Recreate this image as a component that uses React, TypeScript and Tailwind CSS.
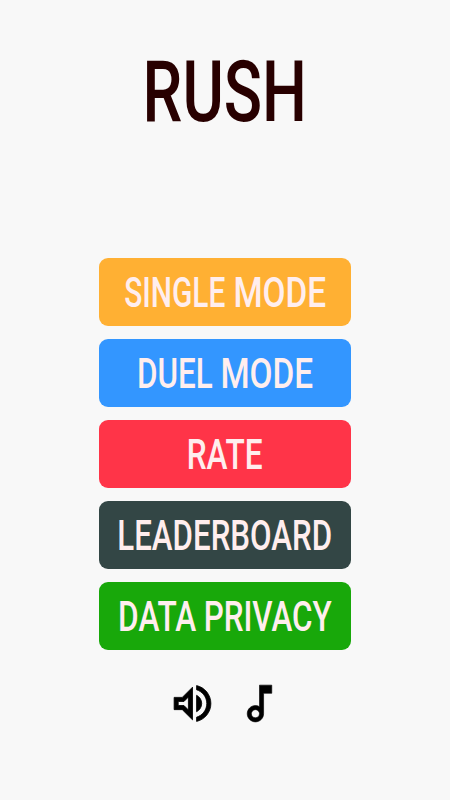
type Word = {
  text: string;
  box: string;
  scale: string;
};

type MenuItem = {
  color: string;
  gap: string;
  words: Word[];
};

const items: MenuItem[] = [
  {
    color: "bg-[#ffb033]",
    gap: "gap-[8px]",
    words: [
      { text: "SINGLE", box: "w-[101px]", scale: "scale-x-[0.695]" },
      { text: "MODE", box: "w-[92px]", scale: "scale-x-[0.775]" },
    ],
  },
  {
    color: "bg-[#3396ff]",
    gap: "gap-[8px]",
    words: [
      { text: "DUEL", box: "w-[75px]", scale: "scale-x-[0.73]" },
      { text: "MODE", box: "w-[92px]", scale: "scale-x-[0.775]" },
    ],
  },
  {
    color: "bg-[#ff3448]",
    gap: "gap-0",
    words: [{ text: "RATE", box: "w-[75px]", scale: "scale-x-[0.735]" }],
  },
  {
    color: "bg-[#334645]",
    gap: "gap-0",
    words: [{ text: "LEADERBOARD", box: "w-[213px]", scale: "scale-x-[0.727]" }],
  },
  {
    color: "bg-[#18a80a]",
    gap: "gap-[9px]",
    words: [
      { text: "DATA", box: "w-[77px]", scale: "scale-x-[0.735]" },
      { text: "PRIVACY", box: "w-[127px]", scale: "scale-x-[0.73]" },
    ],
  },
];

function MenuButton({ color, gap, words }: MenuItem) {
  return (
    <button
      className={`flex h-[67.5px] w-full items-center justify-center rounded-[9px] pt-[2px] text-[43px] leading-none font-medium text-[#ffeeee] ${color} ${gap}`}
    >
      {words.map((word) => (
        <span key={word.text} className={`flex justify-center ${word.box}`}>
          <span className={`shrink-0 whitespace-nowrap ${word.scale}`}>
            {word.text}
          </span>
        </span>
      ))}
    </button>
  );
}

function VolumeIcon() {
  return (
    <svg viewBox="0 0 24 24" className="size-[49px]" fill="currentColor" stroke="currentColor" strokeWidth={0.4}>
      <path d="M3 9v6h4l5 5V4L7 9H3z M10 8.83v6.34L7.83 13H5v-2h2.83L10 8.83z" fillRule="evenodd" />
      <path d="M16.5 12c0-1.77-1.02-3.29-2.5-4.03v8.05c1.48-.73 2.5-2.25 2.5-4.02z" />
      <path d="M14 3.23v2.06c2.89.86 5 3.54 5 6.71s-2.11 5.85-5 6.71v2.06c4.01-.91 7-4.49 7-8.77s-2.99-7.86-7-8.77z" />
    </svg>
  );
}

function NoteIcon() {
  return (
    <svg viewBox="0 0 24 24" className="size-[49px]" fill="currentColor" stroke="currentColor" strokeWidth={0.3}>
      <path
        d="M12 3l.01 10.55c-.59-.34-1.27-.55-2-.55C7.79 13 6 14.79 6 17s1.79 4 4.01 4S14 19.21 14 17V7h4V3h-6z M10.01 19c-1.1 0-2-.9-2-2s.9-2 2-2 2 .9 2 2-.9 2-2 2z"
        fillRule="evenodd"
      />
    </svg>
  );
}

export default function App() {
  return (
    <div className="flex h-[800px] w-[450px] flex-col items-center overflow-hidden bg-[#f8f8f8] font-['Roboto',sans-serif]">
      {/* Title */}
      <h1 className="mt-[48px] flex h-[88px] w-[158px] justify-center text-[86px] leading-[88px] font-medium text-[#280000]">
        <span className="shrink-0 scale-x-[0.735]">RUSH</span>
      </h1>

      {/* Menu */}
      <div className="mt-[122px] flex w-[252.5px] flex-col gap-[13.5px]">
        {items.map((item) => (
          <MenuButton key={item.color} {...item} />
        ))}
      </div>

      {/* Sound toggles */}
      <div className="mt-[29.5px] flex gap-[18px] pl-[1px] text-black">
        <button aria-label="Sound">
          <VolumeIcon />
        </button>
        <button aria-label="Music">
          <NoteIcon />
        </button>
      </div>
    </div>
  );
}
